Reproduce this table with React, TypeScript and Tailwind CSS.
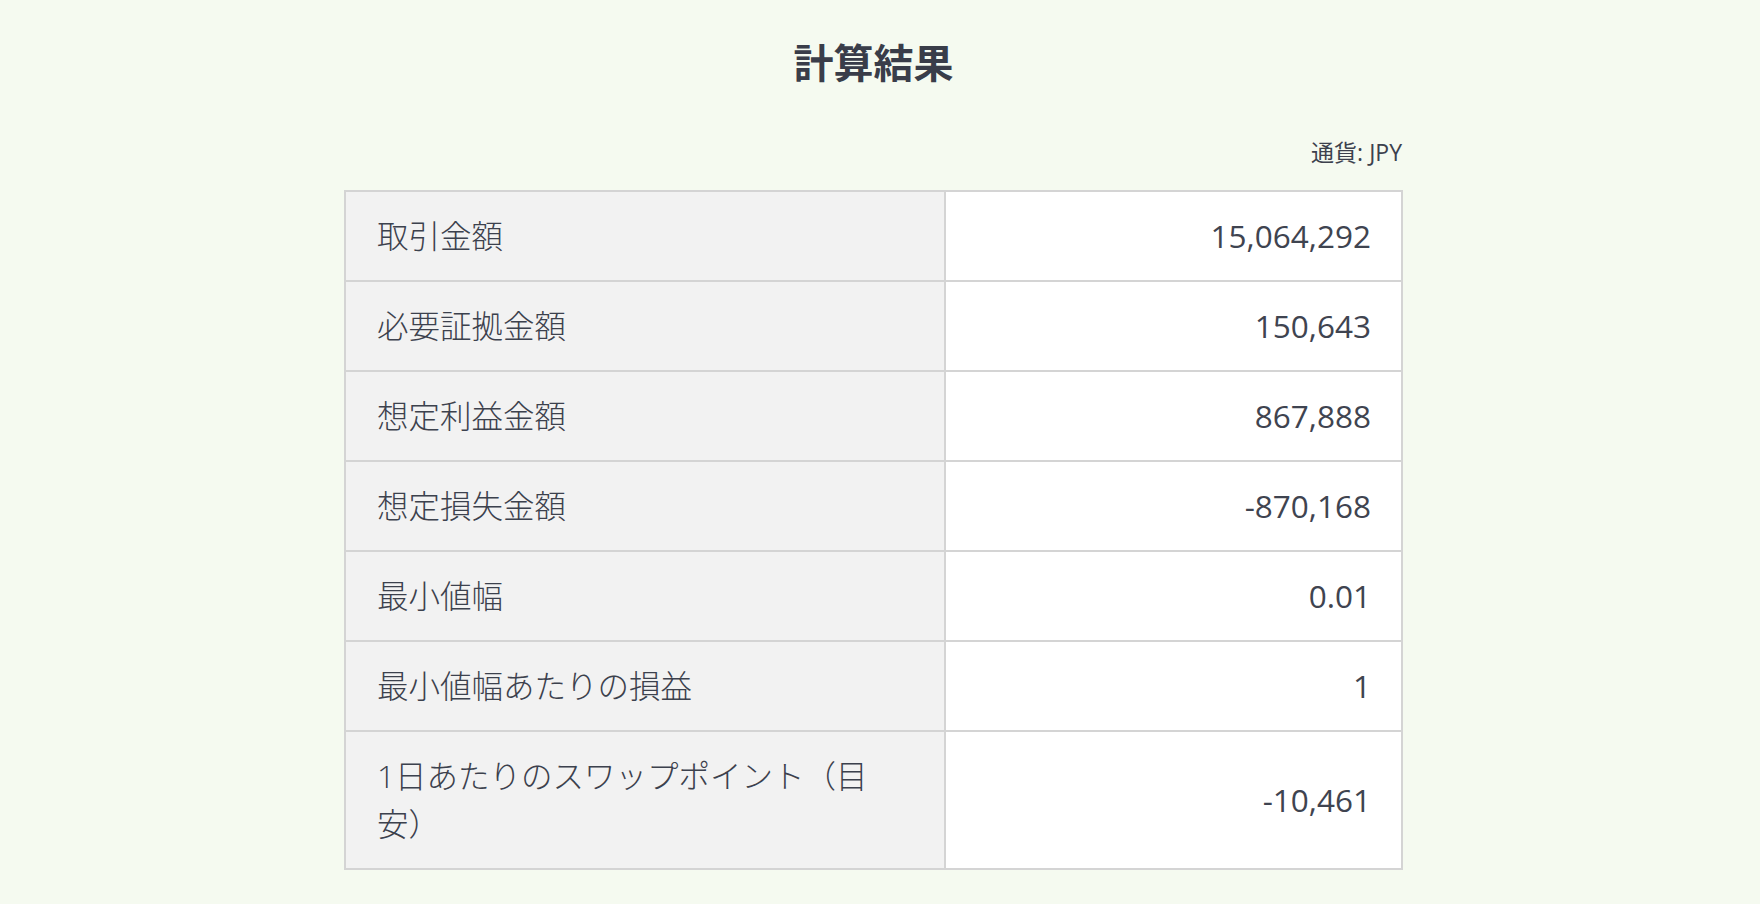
import React from "react";

const rows: { label: React.ReactNode; value: string }[] = [
  { label: "取引金額", value: "15,064,292" },
  { label: "必要証拠金額", value: "150,643" },
  { label: "想定利益金額", value: "867,888" },
  { label: "想定損失金額", value: "-870,168" },
  { label: "最小値幅", value: "0.01" },
  { label: "最小値幅あたりの損益", value: "1" },
  { label: "1日あたりのスワップポイント（目安）", value: "-10,461" },
];

export default function App() {
  return (
    <div
      className="min-h-screen w-full bg-[#f5faf0] text-[#3c414d]"
      style={{ fontFamily: '"Open Sans", "Noto Sans CJK JP", sans-serif' }}
    >
      <div className="flex justify-center pr-[13px]">
        <div className="w-[1059px] flex flex-col">
          <h2 className="pt-[33px] text-center text-[40px] leading-[60px] font-bold text-[#393d49]">
            計算結果
          </h2>
          <div className="mt-[44px] text-right text-[23px] leading-[30px] text-[#3c414d] pr-[1px]">
            通貨: JPY
          </div>
          <div className="mt-[23px] border-2 border-[#d4d4d4] bg-white">
            {rows.map((r, i) => (
              <div
                key={i}
                className={
                  "flex " + (i < rows.length - 1 ? "border-b-2 border-[#d4d4d4]" : "")
                }
              >
                <div className="w-[600px] shrink-0 border-r-2 border-[#d4d4d4] bg-[#f2f2f2] pl-[31px] pr-[60px] py-5 text-[31.5px] leading-[48px] font-light">
                  {r.label}
                </div>
                <div className="flex-1 flex items-center justify-end bg-white pr-[30px] py-5 text-[31.5px] leading-[48px] text-[#3f4450]">
                  {r.value}
                </div>
              </div>
            ))}
          </div>
        </div>
      </div>
    </div>
  );
}
